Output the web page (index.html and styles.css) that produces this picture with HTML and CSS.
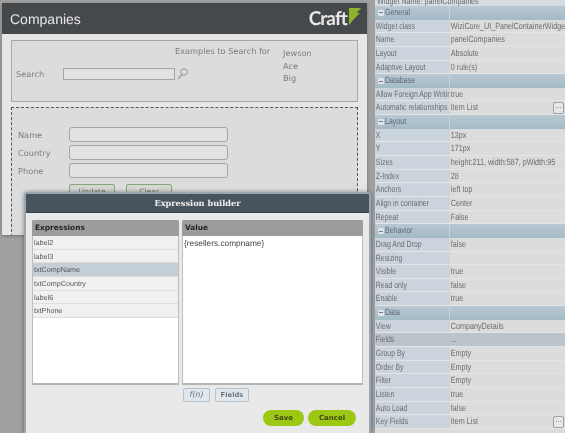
FILE: index.html
```html
<!DOCTYPE html>
<html>
<head>
<meta charset="utf-8">
<title>Companies</title>
<link rel="stylesheet" href="styles.css">
</head>
<body>
<div class="screen">
  <main class="stage">
    <section class="card">
      <header class="card-head">
        <h1>Companies</h1>
        <div class="logo">
          <span class="logo-word">Craft</span>
          <svg class="logo-flag" width="12" height="17" viewBox="0 0 12 17"><path d="M0 0H12L8 5 11 5 5 11 0 17Z" fill="#8cb32a"/></svg>
        </div>
      </header>
      <div class="search-box">
        <div class="search-row">
          <span class="search-label">Search</span>
          <span class="search-input"></span>
          <svg class="search-icon" width="11" height="12" viewBox="0 0 11 12"><circle cx="7" cy="4" r="3.2" fill="none" stroke="#a6a6a6" stroke-width="1.2"/><path d="M5 6.5 1 11" stroke="#a6a6a6" stroke-width="1.6"/></svg>
        </div>
        <div class="examples-title">Examples to Search for</div>
        <ul class="examples">
          <li>Jewson</li>
          <li>Ace</li>
          <li>Big</li>
        </ul>
      </div>
      <div class="details">
        <div class="form-row"><span>Name</span><span class="field"></span></div>
        <div class="form-row"><span>Country</span><span class="field"></span></div>
        <div class="form-row"><span>Phone</span><span class="field"></span></div>
        <div class="form-actions"><span class="ghost-btn">Update</span><span class="ghost-btn">Clear</span></div>
      </div>
    </section>
    <section class="modal">
      <div class="modal-title">Expression builder</div>
      <div class="modal-body">
        <div class="columns">
          <div class="col col-list">
            <div class="col-head">Expressions</div>
            <div class="item">label2</div>
            <div class="item">label3</div>
            <div class="item selected">txtCompName</div>
            <div class="item">txtCompCountry</div>
            <div class="item">label6</div>
            <div class="item">txtPhone</div>
          </div>
          <div class="col col-value">
            <div class="col-head">Value</div>
            <div class="value-text">{resellers.compname}</div>
          </div>
        </div>
        <div class="tools"><span class="tool fn">f(n)</span><span class="tool fields">Fields</span></div>
        <div class="actions"><span class="pill save">Save</span><span class="pill cancel">Cancel</span></div>
      </div>
    </section>
  </main>
  <aside class="props">
    <div class="widget-name"><span>Widget Name: panelCompanies</span></div>
    <div class="group"><i class="minus"></i><span>General</span></div>
    <div class="row"><b>Widget class</b><span>WiziCore_UI_PanelContainerWidge</span></div>
    <div class="row"><b>Name</b><span>panelCompanies</span></div>
    <div class="row"><b>Layout</b><span>Absolute</span></div>
    <div class="row"><b>Adaptive Layout</b><span>0 rule(s)</span></div>
    <div class="group"><i class="minus"></i><span>Database</span></div>
    <div class="row"><b>Allow Foreign App Writir</b><span>true</span></div>
    <div class="row"><b>Automatic relationships</b><span>Item List</span><em class="more">...</em></div>
    <div class="group"><i class="minus"></i><span>Layout</span></div>
    <div class="row"><b>X</b><span>13px</span></div>
    <div class="row"><b>Y</b><span>171px</span></div>
    <div class="row"><b>Sizes</b><span>height:211, width:587, pWidth:95</span></div>
    <div class="row"><b>Z-Index</b><span>28</span></div>
    <div class="row"><b>Anchors</b><span>left top</span></div>
    <div class="row"><b>Align in container</b><span>Center</span></div>
    <div class="row"><b>Repeat</b><span>False</span></div>
    <div class="group"><i class="minus"></i><span>Behavior</span></div>
    <div class="row"><b>Drag And Drop</b><span>false</span></div>
    <div class="row"><b>Resizing</b><span></span></div>
    <div class="row"><b>Visible</b><span>true</span></div>
    <div class="row"><b>Read only</b><span>false</span></div>
    <div class="row"><b>Enable</b><span>true</span></div>
    <div class="group"><i class="minus"></i><span>Data</span></div>
    <div class="row"><b>View</b><span>CompanyDetails</span></div>
    <div class="row active"><b>Fields</b><span>...</span></div>
    <div class="row"><b>Group By</b><span>Empty</span></div>
    <div class="row"><b>Order By</b><span>Empty</span></div>
    <div class="row"><b>Filter</b><span>Empty</span></div>
    <div class="row"><b>Listen</b><span>true</span></div>
    <div class="row"><b>Auto Load</b><span>false</span></div>
    <div class="row"><b>Key Fields</b><span>Item List</span><em class="more">...</em></div>
  </aside>
</div>
</body>
</html>
```
FILE: styles.css
```css
* { box-sizing: border-box; }
html, body { margin: 0; height: 100%; overflow: hidden; }
body { font-family: "Liberation Sans", Arial, sans-serif; background: #9c9c9c; text-rendering: geometricPrecision; }
.screen { width: 565px; height: 433px; display: flex; overflow: hidden; filter: blur(0.35px); }

/* left stage */
.stage { position: relative; width: 375px; flex: none; padding: 3px 0 0 2px; background: #a0a0a0; }
.card { width: 365px; height: 232px; background: #e6e6e6; box-shadow: 0 1px 3px rgba(0,0,0,.3); overflow: hidden; }
.card-head { height: 31px; background: #46494c; display: flex; align-items: center; justify-content: space-between; padding: 0 6px 0 8px; }
.card-head h1 { margin: 0; font: 400 14px "Liberation Sans", sans-serif; color: #e6e6e6; }
.logo { display: flex; align-items: flex-start; }
.logo-word { font: 700 19px/22px Lato, sans-serif; letter-spacing: -.9px; color: #e8e8e8; }
.logo-flag { margin: 0 0 0 2px; }

.search-box { position: relative; margin: 6px 9px 0; height: 62px; border: 1px solid #a8a8a8; background: #dcdcdc; color: #7d7d7d; font: 8.2px "DejaVu Sans", sans-serif; }
.search-row { position: absolute; left: 4px; top: 27px; display: flex; align-items: center; }
.search-label { width: 47px; }
.search-input { width: 112px; height: 12px; border: 1px solid #a5a5a5; background: #e2e2e2; }
.search-icon { margin-left: 2px; }
.examples-title { position: absolute; left: 163px; top: 5px; }
.examples { position: absolute; left: 271px; top: 6px; margin: 0; padding: 0; list-style: none; }
.examples li { height: 12.5px; line-height: 13px; }

.details { margin: 5px 9px 0; height: 130px; border: 1px dashed #555; background: #dcdcdc; padding: 19px 0 0 6px; color: #7d7d7d; font: 8.2px "DejaVu Sans", sans-serif; }
.form-row { display: flex; align-items: center; height: 15px; margin-bottom: 3px; }
.form-row span:first-child { width: 51px; }
.field { width: 159px; height: 15px; border: 1px solid #a5a5a5; border-radius: 3px; background: #e2e2e2; }
.form-actions { display: flex; gap: 11px; margin: 6px 0 0 51px; }
.ghost-btn { width: 46px; height: 14px; border: 1px solid #86a878; border-radius: 2px 2px 0 0; background: #d3d8d3; font-size: 7.5px; text-align: center; line-height: 13px; color: #777; }

/* modal */
.modal { position: absolute; left: 24px; top: 192px; width: 347px; height: 241px; background: #e9e9e9; border: 2px solid #98a7b2; border-bottom: 0; border-radius: 4px 4px 0 0; box-shadow: 0 0 4px rgba(0,0,0,.4); }
.modal-title { height: 19px; background: #48545d; border-bottom: 1px solid #37424a; color: #f2f2f2; font: 700 8.2px/18px "DejaVu Serif", serif; text-align: center; }
.modal-body { padding: 7px 6px 0 6px; }
.columns { display: flex; gap: 3px; height: 165px; }
.col { background: #fff; border: 1px solid #bdbdbd; border-top: 0; border-bottom: 2px solid #b5b5b5; }
.col-list { width: 147px; }
.col-value { width: 181px; }
.col-head { height: 16px; background: #9c9c9c; border-radius: 2px 2px 0 0; margin: 0 -1px; padding-left: 3px; color: #232323; font: 700 7.4px/16px "DejaVu Sans", sans-serif; }
.item { height: 13.67px; background: #f0f0f0; border-bottom: 1px solid #dddddd; font-size: 7.2px; line-height: 13px; padding-left: 1px; color: #555; }
.item.selected { background: #c4ced7; }
.value-text { font-size: 8.3px; line-height: 13px; padding: 1px 0 0 1px; color: #444; }
.tools { display: flex; gap: 5px; margin: 3px 0 0 151px; }
.tool { height: 14px; border: 1px solid #b4c2cc; border-radius: 2px; background: #e1e7ec; font: 700 6.8px/12px "DejaVu Sans", sans-serif; color: #6d7780; text-align: center; }
.fields { width: 34px; }
.tool.fn { width: 27px; font: italic 400 8px/12px "DejaVu Sans", sans-serif; }
.actions { display: flex; justify-content: flex-end; gap: 4px; margin: 8px 7px 0 0; }
.pill { height: 16px; border-radius: 8px; background: #9cc813; color: #404a10; font: 700 7px/16px "DejaVu Sans", sans-serif; text-align: center; }
.save { width: 41px; }
.cancel { width: 48px; }

/* property panel: the captured panel is horizontally squeezed, so its text is narrowed */
.props { width: 190px; flex: none; background: #dcdcdc; font-size: 9px; color: #6c6c6c; overflow: hidden; }
.widget-name { height: 6px; line-height: 2px; padding-left: 2px; background: #d6dde2; white-space: nowrap; }
.widget-name span { display: inline-block; transform: scaleX(.8); transform-origin: left; }
.group, .row { position: relative; height: 13.65px; line-height: 13.5px; white-space: nowrap; }
.group { display: flex; align-items: center; background: linear-gradient(90deg, transparent 74px, #c9d4dc 74px, #c9d4dc 75px, transparent 75px), linear-gradient(#b9c9d4, #a4b9c6); color: #5f6a70; padding-left: 3px; }
.group span { transform: scaleX(.78); transform-origin: left; }
.minus { position: relative; flex: none; width: 6px; height: 6px; margin-right: 1px; border-radius: 1px; background: #dfe4e8; }
.minus::after { content: ""; position: absolute; left: 1px; right: 1px; top: 2.5px; height: 1px; background: #6f7b84; }
.row { display: flex; border-bottom: 1px solid #e4e4e4; background: linear-gradient(90deg, #cbd4dc 75px, #dcdcdc 75px); }
.row b { flex: none; width: 97px; margin-right: -22px; padding-left: 1px; font-weight: 400; overflow: hidden; color: #6a6e72; transform: scaleX(.77); transform-origin: left; }
.row span { flex: none; width: 144px; padding-left: 1px; overflow: hidden; transform: scaleX(.8); transform-origin: left; }
.row.active { background: #bbc3cb; }
.more { position: absolute; right: 1px; top: 1px; width: 11px; height: 12px; border: 1px solid #9aa0a5; border-radius: 2px; background: #e8e8e8; font: 8px/6px "Liberation Sans", sans-serif; text-align: center; color: #666; }
```
